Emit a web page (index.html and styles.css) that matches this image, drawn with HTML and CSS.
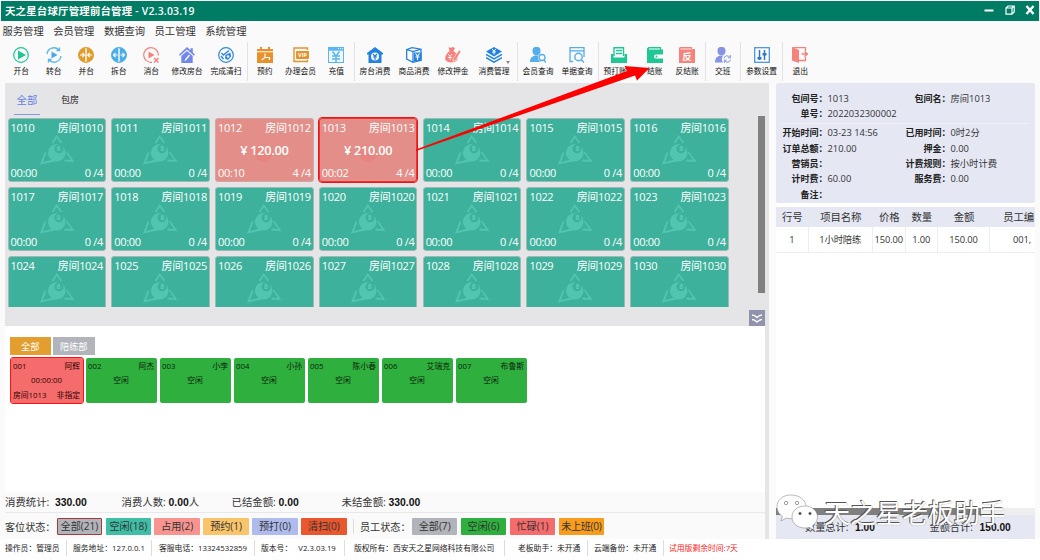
FILE: index.html
```
<!DOCTYPE html>
<html lang="zh-CN">
<head>
    <meta charset="UTF-8">
    <meta name="viewport" content="width=device-width, initial-scale=1.0">
    <title>天之星台球厅管理前台管理</title>
    <link rel="stylesheet" href="styles.css">
</head>
<body>
    <header class="title-bar">
        <h1>天之星台球厅管理前台管理 - V2.3.03.19</h1>
        <div class="window-buttons">
            <svg width="10" height="10" viewBox="0 0 10 10"><path d="M0.5 5.5h9" stroke="#fff" stroke-width="2"/></svg>
            <svg width="10" height="10" viewBox="0 0 10 10" fill="none" stroke="#fff" stroke-width="1.2"><path d="M1 3h6v6.200H1zM1 3l2-2h6.200v6L7 9.200M7 3l2-2"/></svg>
            <svg width="10" height="10" viewBox="0 0 10 10"><path d="M1.500 1l7 8M8.500 1l-7 8" stroke="#fff" stroke-width="2.4"/></svg>
        </div>
    </header>

    <nav class="menu">
        <span>服务管理</span>
        <span>会员管理</span>
        <span>数据查询</span>
        <span>员工管理</span>
        <span>系统管理</span>
    </nav>

    <div class="toolbar">
        <div class="tool-group">
            <div class="tool">
                <svg viewBox="0 0 16 16"><circle cx="8" cy="8" r="7.300" fill="none" stroke="#1fc795" stroke-width="1.200"/><path d="M5 3.500l8 4.500-8 4.500z" fill="#1fc795"/></svg>
                <span>开台</span>
            </div>
            <div class="tool">
                <svg viewBox="0 0 16 16"><path d="M1 7a7 7 0 0 1 12-4M15 9a7 7 0 0 1-12 4M13.500.500v3h-3M2.500 15.500v-3h3" fill="none" stroke="#58b4ee" stroke-width="1.300"/><path d="M5.500 4.500l6 3.500-6 3.500z" fill="#4aa8ea"/></svg>
                <span>转台</span>
            </div>
            <div class="tool">
                <svg viewBox="0 0 16 16"><circle cx="8" cy="8" r="7.300" fill="#fff" stroke="#e29b2d" stroke-width="1.200"/><path d="M7.300 1a7 7 0 0 0 0 14zM8.700 1a7 7 0 0 1 0 14z" fill="#e29b2d"/><path d="M2 8h4M4.300 5.800L6.300 8l-2 2.200M14 8h-4M11.700 5.800L9.700 8l2 2.200" fill="none" stroke="#fff" stroke-width="1.200"/></svg>
                <span>并台</span>
            </div>
            <div class="tool">
                <svg viewBox="0 0 16 16"><circle cx="8" cy="8" r="7.300" fill="#fff" stroke="#4aaeea" stroke-width="1.200"/><path d="M7.300 1a7 7 0 0 0 0 14zM8.700 1a7 7 0 0 1 0 14z" fill="#4aaeea"/><path d="M2.500 8h4M4.500 5.800L2.500 8l2 2.200M13.500 8h-4M11.500 5.800l2 2.200-2 2.200" fill="none" stroke="#fff" stroke-width="1.200"/></svg>
                <span>拆台</span>
            </div>
            <div class="tool">
                <svg viewBox="0 0 16 16"><path d="M9 15.200A7.300 7.300 0 1 1 15.300 8.500" fill="none" stroke="#f77f79" stroke-width="1.200"/><path d="M5.500 4.500l6 3.500-6 3.500z" fill="#f77f79"/><path d="M11 11l4.500 4.500M15.500 11L11 15.500" stroke="#f77f79" stroke-width="1.400"/></svg>
                <span>消台</span>
            </div>
            <div class="tool wide">
                <svg viewBox="0 0 16 16"><path d="M8 0l3.500 3.300V1.200h2.300v4.300L16 7.700l-1 1L8 2.500 1 8.700l-1-1zM8 4l5.700 5v7H2.300V9z" fill="#7187ec"/><path d="M6 12.500l4-5 1 1-4 5-1.500.500z" fill="#fff"/></svg>
                <span>修改房台</span>
            </div>
            <div class="tool wide">
                <svg viewBox="0 0 16 16"><circle cx="8" cy="8" r="7.300" fill="none" stroke="#2f86e0" stroke-width="1.200"/><path d="M3.500 6l2 2L11 3.500" fill="none" stroke="#2f86e0" stroke-width="1.400"/><path d="M7.500 8l5-2.500.500 4-3 3.500-3-1.500z" fill="#2f86e0"/><circle cx="10" cy="9.500" r="1.200" fill="#fff"/><path d="M3 9l2.500 3" stroke="#2f86e0" stroke-width="1.500"/></svg>
                <span>完成清扫</span>
            </div>
        </div>
        <div class="tool-group">
            <div class="tool">
                <svg viewBox="0 0 16 16"><path d="M0 2h3V0h2v2h6V0h2v2h3v2.300H0zM0 5.300h16V16H0z" fill="#e8912a"/><path d="M8 6.500v4L4.500 13M8 10.500h4.500V13" fill="none" stroke="#fff" stroke-width="1.200"/></svg>
                <span>预约</span>
            </div>
            <div class="tool wide">
                <svg viewBox="0 0 16 16"><path d="M14.500 3V1H1v13.500h13.500V13" fill="none" stroke="#e8912a" stroke-width="1.400"/><rect x="3" y="4" width="13" height="8" rx="1" fill="#e8912a"/><text x="9.500" y="10" class="vip">VIP</text></svg>
                <span>办理会员</span>
            </div>
            <div class="tool">
                <svg viewBox="0 0 16 16"><path d="M0 0h16v16H0z" fill="#5ab6f3"/><path d="M1 3.700h14V15H1z" fill="#eef7fe"/><path d="M10 1.700h1M12 1.700h1M14 1.700h1" stroke="#fff"/><path d="M4.500 4.500L8 9l3.500-4.500M8 9v6M4 9h8M4 12h8" fill="none" stroke="#5ab6f3" stroke-width="1.500"/></svg>
                <span>充值</span>
            </div>
        </div>
        <div class="tool-group">
            <div class="tool wide">
                <svg viewBox="0 0 16 16"><path d="M8 0l8 6v1.500h-1.500V16h-13V7.500H0V6z" fill="#2382df"/><circle cx="8" cy="9.500" r="4" fill="#fff"/><path d="M6 7l2 2.300L10 7M8 9.300V13M6 10h4" fill="none" stroke="#2382df" stroke-width="1.200"/></svg>
                <span>房台消费</span>
            </div>
            <div class="tool wide">
                <svg viewBox="0 0 16 16"><path d="M.700 2.500L6 .700l9 1.500v11L7 15.300.700 12zM.700 2.500L7 4.500l8-2.300M7 4.500v11" fill="#fff" stroke="#2382df" stroke-width="1.300"/><rect x="8" y="5.500" width="7.500" height="8.500" fill="#2382df"/><path d="M9.500 6.500l2 2.500 2-2.500M11.500 9v4M9.500 10h4" fill="none" stroke="#fff" stroke-width="1.100"/></svg>
                <span>商品消费</span>
            </div>
            <div class="tool wide">
                <svg viewBox="0 0 16 16"><path d="M3.500 0l2 1 2-1 2.500 1-1.500 3.200C12 6 13 9 12.500 12c-1 4.500-10 4.500-12 1C-.500 10 1 6.500 4.500 4.200z" fill="#f5837c"/><path d="M8 12l6-9 2 1.500-5.500 9-2.500 1z" fill="#f5837c" stroke="#fff" stroke-width=".600"/><path d="M3 7l2 2.500L7 7M5 9.500V13M3 10.500h4" fill="none" stroke="#fff" stroke-width=".800"/></svg>
                <span>修改押金</span>
            </div>
            <div class="tool drop">
                <svg viewBox="0 0 16 16"><path d="M8 0l8 4.500L8 9.500 0 4.500z" fill="#2382df"/><path d="M0 7.500l8 4.500 8-4.500M0 10.700l8 4.500 8-4.500" fill="none" stroke="#2382df" stroke-width="1.500"/><path d="M6 2l2 2 2-2M8 4v3.500M6 5h4" fill="none" stroke="#fff"/></svg>
                <span>消费管理</span>
            </div>
        </div>
        <div class="tool-group">
            <div class="tool wide">
                <svg viewBox="0 0 16 16"><ellipse cx="6.500" cy="4" rx="4" ry="4.200" fill="#53aeee"/><path d="M0 15C0 10 3 9.500 5 8.500h3.500A4.500 4.500 0 0 0 11 15z" fill="#53aeee"/><circle cx="12" cy="10.500" r="3" fill="none" stroke="#53aeee" stroke-width="1.300"/><path d="M14 13l2 2.500" stroke="#53aeee" stroke-width="1.500"/></svg>
                <span>会员查询</span>
            </div>
            <div class="tool wide">
                <svg viewBox="0 0 16 16"><path d="M4 14.500H1V.700h14V10" fill="none" stroke="#53aeee" stroke-width="1.300"/><path d="M1 3.200h14v1.300H1z" fill="#53aeee"/><circle cx="9.500" cy="10" r="3.700" fill="none" stroke="#53aeee" stroke-width="1.400"/><path d="M12 12.500l3 3" fill="none" stroke="#53aeee" stroke-width="1.400"/></svg>
                <span>单据查询</span>
            </div>
        </div>
        <div class="tool-group">
            <div class="tool wide">
                <svg viewBox="0 0 16 16"><path d="M0 7h2.500v3.500h11V7H16v9H0z" fill="#1fc795"/><path d="M3 9V.700h9.500V9" fill="#fff" stroke="#1fc795" stroke-width="1.400"/><path d="M5 3.500h6M5 6.500h6" stroke="#1fc795" stroke-width="1.300"/></svg>
                <span>预打账单</span>
            </div>
            <div class="tool">
                <svg viewBox="0 0 16 16"><path d="M0 1.500L1.500 0H14v2.500h2V16H0z" fill="#1fc795"/><path d="M2 2h11" stroke="#fff"/><path d="M16 7.500H9a2 2 0 0 0 0 4h7z" fill="#fff"/><circle cx="9.500" cy="9.500" r="1" fill="#1fc795"/></svg>
                <span>结账</span>
            </div>
            <div class="tool">
                <svg viewBox="0 0 16 16"><path d="M0 1l1-1h12v2h3v14H0z" fill="#f5837c"/><path d="M1.500 2h11" stroke="#fff" stroke-width=".800"/><text x="8" y="13" class="fan">反</text></svg>
                <span>反结账</span>
            </div>
        </div>
        <div class="tool-group">
            <div class="tool">
                <svg viewBox="0 0 16 16"><ellipse cx="6.500" cy="4" rx="4" ry="4.200" fill="#8794e6"/><path d="M0 15.500C0 10 3 9.500 5 8.500h3.500A5 5 0 0 0 8 15.500z" fill="#8794e6"/><path d="M9 11.500a3.200 3.200 0 0 1 6-1M15.500 12.500a3.200 3.200 0 0 1-6 1M15.300 8v2.800h-2.500M9.300 16v-2.800h2.500" fill="none" stroke="#8794e6"/></svg>
                <span>交班</span>
            </div>
        </div>
        <div class="tool-group">
            <div class="tool wide">
                <svg viewBox="0 0 16 16"><rect x=".700" y=".700" width="14.600" height="14.600" fill="#fff" stroke="#4b97dc" stroke-width="1.300"/><path d="M5.500 3v10M10.500 3v10" stroke="#2f78c4" stroke-width="1.500"/><path d="M3.500 10h4v2.500h-4zM8.500 6h4v2.500h-4z" fill="#2f78c4"/></svg>
                <span>参数设置</span>
            </div>
        </div>
        <div class="tool-group">
            <div class="tool">
                <svg viewBox="0 0 16 16"><path d="M0 0l7 3v13l-7-2.500z" fill="#f5837c"/><path d="M1 .700h12.500V4M7 13.500h6.500V10" fill="none" stroke="#f5837c" stroke-width="1.300"/><path d="M9.500 7h5M12.500 4.500L15.300 7l-2.800 2.500" fill="none" stroke="#f5837c" stroke-width="1.600"/></svg>
                <span>退出</span>
            </div>
        </div>
    </div>

    <main class="main">
        <div class="left">
            <section class="rooms">
                <div class="room-side">
                    <div class="room-tabs">
                        <span class="active">全部</span>
                        <span>包房</span>
                    </div>
                    <div class="room-grid" id="roomGrid"></div>
                </div>
                <div class="room-tail">
                    <div class="scroll-thumb"></div>
                    <div class="fold">
                        <svg width="12" height="11" viewBox="0 0 12 11" fill="none" stroke="#fff" stroke-width="1.300"><path d="M1 2q2.500 0 5 2.500Q8.500 2 11 2M1 6.500q2.500 0 5 2.500 2.500-2.500 5-2.500"/></svg>
                    </div>
                </div>
            </section>

            <section class="staff">
                <div class="staff-tabs">
                    <span class="active">全部</span>
                    <span>陪练部</span>
                </div>
                <div class="staff-list" id="staffList"></div>
            </section>

            <div class="stats">
                <span class="stat s1">消费统计: <b>330.00</b></span>
                <span class="stat s2">消费人数: <b>0.00</b>人</span>
                <span class="stat s3">已结金额: <b>0.00</b></span>
                <span class="stat">未结金额: <b>330.00</b></span>
            </div>
            <div class="status">
                <span class="status-label">客位状态：</span>
                <span class="chip gray selected">全部(21)</span>
                <span class="chip teal">空闲(18)</span>
                <span class="chip pink">占用(2)</span>
                <span class="chip yellow">预约(1)</span>
                <span class="chip blue">预打(0)</span>
                <span class="chip orange">清扫(0)</span>
                <span class="status-label staff-label">员工状态：</span>
                <span class="chip gray">全部(7)</span>
                <span class="chip green">空闲(6)</span>
                <span class="chip red">忙碌(1)</span>
                <span class="chip amber">未上班(0)</span>
            </div>
        </div>

        <aside class="order">
            <div class="order-info">
                <div class="info-grid">
                    <b>包间号：</b><span>1013</span><b>包间名：</b><span>房间1013</span>
                    <b>单号：</b><span>2022032300002</span>
                </div>
                <div class="info-grid second">
                    <b>开始时间：</b><span>03-23 14:56</span><b>已用时间：</b><span>0时2分</span>
                    <b>订单总额：</b><span>210.00</span><b>押金：</b><span>0.00</span>
                    <b>营销员：</b><span></span><b>计费规则：</b><span>按小时计费</span>
                    <b>计时费：</b><span>60.00</span><b>服务费：</b><span>0.00</span>
                    <b>备注：</b><span></span>
                </div>
            </div>
            <div class="order-table">
                <div class="order-row head">
                    <span>行号</span><span>项目名称</span><span>价格</span><span>数量</span><span>金额</span><span class="last">员工编</span>
                </div>
                <div class="order-row">
                    <span>1</span><span>1小时陪练</span><span>150.00</span><span>1.00</span><span>150.00</span><span class="last">001,</span>
                </div>
            </div>
            <div class="order-scroll"><div class="order-thumb"></div></div>
            <div class="order-total">
                <span>数量总计: <b>1.00</b></span>
                <span>金额合计: <b>150.00</b></span>
            </div>
        </aside>
    </main>

    <footer class="footer">
        <span class="f1">操作员：管理员</span>
        <span class="f2">服务地址：127.0.0.1</span>
        <span class="f3">客服电话：13324532859</span>
        <span class="f4">版本号：&nbsp;&nbsp; V2.3.03.19</span>
        <span class="f5">版权所有：西安天之星网络科技有限公司</span>
        <span class="f6">老板助手：未开通</span>
        <span class="f7">云端备份：未开通</span>
        <span class="trial">试用版剩余时间:7天</span>
    </footer>

    <svg class="arrow" viewBox="0 0 240 90"><path d="M2 85.500L213 7l-2.500-5 25 2-12.500 12.500-2-5L2 87z" fill="#fe0000"/></svg>

    <div class="watermark">
        <svg width="43" height="37" viewBox="0 0 43 37" stroke="#777" stroke-width=".500">
            <path d="M15 1C6 1 1 6.500 1 13c0 4.500 2.500 7.500 5.500 9.500L5 27l5.500-3c2 .500 3.500.700 5 .700C25 25 30 19 30 13 30 6 23.500 1 15 1z" fill="#fff"/>
            <path d="M29 12c-8 0-13 5-13 11s5 11 13 11c1.500 0 3-.200 4.300-.600L38 36l-1.500-4.300c3-2 5-5 5-8.700 0-6-5.500-11-12.500-11z" fill="#fff"/>
            <g fill="#fff" stroke="#444"><circle cx="10" cy="9" r="1.700"/><circle cx="21" cy="9" r="1.700"/></g>
            <g fill="#444"><circle cx="24" cy="19.500" r="1.300"/><circle cx="34" cy="19.500" r="1.300"/></g>
        </svg>
        <span>天之星老板助手</span>
    </div>

    <script>
        // rooms in use: number -> [amount, time]
        const used = { 1012: ['120.00', '00:10'], 1013: ['210.00', '00:02'] };
        const selectedRoom = 1013;

        const staff = [
            ['001', '阿辉'], ['002', '阿杰'], ['003', '小李'], ['004', '小孙'],
            ['005', '陈小春'], ['006', '艾瑞克'], ['007', '布鲁斯']
        ];

        const ballIcon = `
            <svg class="ball" viewBox="0 0 36 31">
                <path d="M12.500 8l4.200-6.500L21.500 8" fill="none" stroke="currentColor" stroke-width="1.800"/>
                <path d="M4.500 17.500h2L3 27l10-2.500 2 2L0 29.500zM27 16.500l7.500 10.500-10.500-.500 1-2 6 .500-5-7.500z" fill="currentColor"/>
                <circle cx="16.700" cy="17.700" r="8.800" fill="currentColor"/>
                <circle class="ball-spot" cx="19" cy="13.700" r="4.500"/>
            </svg>`;

        function renderRooms() {
            const html = [];
            for (let no = 1010; no <= 1030; no++) {
                const room = used[no];
                html.push(`
                    <div class="room ${room ? 'busy' : ''} ${no === selectedRoom ? 'selected' : ''}">
                        ${ballIcon}
                        <div class="room-line"><span>${no}</span><span>房间${no}</span></div>
                        ${room ? `<div class="room-price">¥ ${room[0]}</div>` : '<div class="ball-no">8</div>'}
                        <div class="room-line"><span>${room ? room[1] : '00:00'}</span><span>${room ? 4 : 0} /4</span></div>
                    </div>`);
            }
            document.getElementById('roomGrid').innerHTML = html.join('');
        }

        function renderStaff() {
            document.getElementById('staffList').innerHTML = staff.map(([no, name], i) => `
                <div class="person ${i === 0 ? 'working' : ''}">
                    <div class="person-line"><span>${no}</span><span>${name}</span></div>
                    <div class="person-state">${i === 0 ? '00:00:00' : '空闲'}</div>
                    <div class="person-line">${i === 0 ? '<span>房间1013</span><span>非指定</span>' : ''}</div>
                </div>
            `).join('');
        }

        renderRooms();
        renderStaff();
    </script>
</body>
</html>
```
FILE: styles.css
```
* {
    box-sizing: border-box;
}

body {
    display: flex;
    flex-direction: column;
    width: 1040px;
    height: 560px;
    margin: 0;
    padding: 1px 0 0;
    overflow: hidden;
    position: relative;
    font-family: "Open Sans", "Noto Sans CJK SC", sans-serif;
    font-size: 10.4px;
    color: #333;
    background-color: #fafafa;
    white-space: nowrap;
}

/* Title bar */
.title-bar {
    display: flex;
    align-items: center;
    justify-content: space-between;
    height: 20px;
    margin: 0 1px;
    padding: 0 4px 0 4px;
    background-color: #007b64;
    color: #fff;
}

.title-bar h1 {
    margin: 0;
    font-size: 10.4px;
    font-weight: 600;
    line-height: 19px;
    letter-spacing: 0.22px;
}

.window-buttons {
    display: flex;
    gap: 10.5px;
    padding-bottom: 2px;
}

/* Menu and toolbar */
.menu {
    display: flex;
    gap: 9.5px;
    height: 21px;
    padding-left: 2.5px;
    line-height: 21px;
    font-size: 10.3px;
}

.toolbar {
    display: flex;
    height: 41px;
    padding-left: 4px;
}

.tool-group {
    display: flex;
    height: 39px;
    padding: 0 1px;
    border-right: 1px solid #e2e2e2;
}

.tool-group:last-child {
    border-right: none;
}

.tool {
    position: relative;
    display: flex;
    flex-direction: column;
    align-items: center;
    width: 32.5px;
    padding-top: 5px;
    font-size: 7.75px;
    color: #111;
}

.tool.wide {
    width: 39px;
}

.tool.drop {
    width: 43px;
}

.tool svg {
    width: 16px;
    height: 16px;
}

.tool span {
    margin-top: 2px;
    line-height: 12px;
}

.tool.drop::after {
    content: "";
    position: absolute;
    top: 19px;
    right: 6px;
    border: 2.5px solid transparent;
    border-top: 3px solid #888;
}

.vip {
    font-size: 5.5px;
    font-weight: bold;
    fill: #fff;
    text-anchor: middle;
}

.fan {
    font-size: 9.5px;
    font-weight: bold;
    fill: #fff;
    text-anchor: middle;
}

/* Layout */
.main {
    display: flex;
    gap: 7px;
    height: 456px;
    padding: 0 5px;
}

.left {
    display: flex;
    flex-direction: column;
    width: 764px;
    border-right: 4px solid #e5e5e8;
}

/* Rooms */
.rooms {
    display: flex;
    justify-content: space-between;
    height: 243px;
    background-color: #e5e5e8;
}

.room-side {
    padding-left: 2.5px;
}

.room-tabs {
    display: flex;
    gap: 15px;
    height: 34px;
    padding-left: 6.5px;
    line-height: 34px;
    font-size: 9px;
    color: #111;
}

.room-tabs span {
    width: 26px;
    height: 32px;
    text-align: center;
}

.room-tabs .active {
    font-size: 10.4px;
    color: #6480e6;
    border-bottom: 1.5px solid #8299ea;
}

.room-tabs span + span {
    margin-left: 2px;
}

.room-grid {
    display: grid;
    grid-template-columns: repeat(7, 98.6px);
    grid-auto-rows: 64px;
    gap: 5px 5.2px;
    height: 190px;
    padding-top: 1px;
    overflow: hidden;
}

.room {
    position: relative;
    display: flex;
    flex-direction: column;
    justify-content: space-between;
    padding: 1px 2px;
    border: 1px solid #9fbab3;
    border-radius: 3px;
    background-color: #3db19b;
    color: #fff;
    font-size: 11px;
}

.room.busy {
    border-color: #cfa8a6;
    background-color: #e38e88;
}

.room.selected {
    outline: 1px solid #f01414;
    border-color: #e33;
}

.room-line {
    display: flex;
    justify-content: space-between;
    position: relative;
    line-height: 15px;
    letter-spacing: -0.3px;
}

.room-price {
    position: relative;
    text-align: center;
    font-size: 12.8px;
    font-weight: 600;
    line-height: 18px;
    letter-spacing: -0.3px;
}

.ball {
    position: absolute;
    top: 16px;
    left: 31px;
    width: 36px;
    height: 31px;
    color: #52c5b0;
}

.ball-spot {
    fill: #3db19b;
}

.ball-no {
    position: absolute;
    top: 25px;
    left: 48px;
    font-size: 7px;
    font-weight: bold;
    line-height: 9px;
    color: #5fcdb9;
}

.busy .ball {
    color: #e8847f;
}

.busy .ball path {
    display: none;
}

.busy .ball-spot {
    fill: #e38e88;
}

.room-tail {
    display: flex;
    flex-direction: column;
    align-items: flex-end;
    justify-content: space-between;
    padding-top: 33px;
}

.scroll-thumb {
    width: 7px;
    height: 177px;
    background-color: #808080;
}

.fold {
    display: flex;
    align-items: center;
    justify-content: center;
    width: 16px;
    height: 16px;
    background-color: #9193ad;
}

/* Staff */
.staff {
    height: 166px;
    padding: 11px 0 0 4.5px;
    background-color: #fff;
}

.staff-tabs {
    display: flex;
    gap: 2px;
}

.staff-tabs span {
    width: 41.5px;
    height: 18px;
    line-height: 19px;
    text-align: center;
    font-size: 9.2px;
    color: #fff;
    background-color: #b2b4bb;
}

.staff-tabs .active {
    background-color: #e49d2f;
}

.staff-list {
    display: flex;
    gap: 3px;
    margin-top: 3px;
    padding-left: 1px;
}

.person {
    width: 71px;
    height: 45px;
    padding: 1px 2.5px;
    border-radius: 2px;
    background-color: #2fb03e;
    color: #0b1c0d;
    font-size: 7.8px;
}

.person.working {
    width: 72px;
    outline: 1.5px solid #f11;
    background-color: #f56c6c;
    color: #300;
}

.person-line {
    display: flex;
    justify-content: space-between;
    line-height: 14px;
}

.person-state {
    line-height: 15px;
    text-align: center;
}

/* Totals and status rows */
.stats {
    display: flex;
    height: 20px;
    line-height: 20px;
    font-size: 10.4px;
}

.stats b {
    font-family: "Liberation Sans", sans-serif;
    color: #111;
}

.s1 {
    width: 116.5px;
}

.s1 b {
    margin-left: 3px;
}

.s2 {
    width: 110px;
}

.s3 {
    width: 110px;
}

.status {
    display: flex;
    align-items: center;
    gap: 3.4px;
    height: 27px;
    border-top: 1px solid #e8e8e8;
    font-size: 10.1px;
}

.status-label {
    width: 48.3px;
}

.staff-label {
    width: 55.5px;
    margin-left: 3px;
    padding-left: 6px;
    border-left: 1px solid #ddd;
}

.chip {
    flex-shrink: 0;
    width: 45.5px;
    height: 17px;
    line-height: 17px;
    text-align: center;
    border-radius: 1px;
}

.chip.selected {
    line-height: 15px;
    border: 1px solid #a43a3a;
}

.gray { background-color: #b2b4bb; }
.teal { background-color: #3fbda5; }
.pink { background-color: #f8948f; }
.yellow { background-color: #fac46b; }
.blue { background-color: #b0bbed; }
.orange { background-color: #e8572d; }
.green { background-color: #2fb03e; }
.red { background-color: #f56c6c; }

.amber {
    background-color: #f79c1c;
    letter-spacing: -0.3px;
}

/* Order panel */
.order {
    display: flex;
    flex-direction: column;
    width: 259px;
    background-color: #fff;
}

.order-info {
    height: 120px;
    padding: 8px 6px 0;
    background-color: #e5e7f3;
    border-radius: 2px;
    font-size: 9.3px;
}

.info-grid {
    display: grid;
    grid-template-columns: 45.5px 78px 45px 70px;
    grid-auto-rows: 15.4px;
    line-height: 15.4px;
}

.info-grid b {
    font-size: 9px;
    text-align: right;
    color: #222;
}

.info-grid.second {
    margin-top: 1.5px;
    padding-top: 1px;
    border-top: 1px solid #f0f0f5;
}

.order-table {
    flex: 1;
    margin-top: 4px;
    overflow: hidden;
}

.order-row {
    display: grid;
    grid-template-columns: 32.5px 64.5px 32.5px 32.5px 52px 45px;
    height: 25.5px;
    line-height: 25px;
    border-bottom: 1px solid #eee;
    font-size: 9.3px;
    text-align: center;
}

.order-row span {
    border-right: 1px solid #eee;
    letter-spacing: -0.1px;
}

.order-row.head {
    height: 20px;
    line-height: 20px;
    font-size: 10.4px;
    border-bottom: none;
    background-color: #e5e7f3;
}

.order-row.head span {
    border-right: none;
}

.order-row .last {
    padding-right: 4px;
    text-align: right;
    border-right: none;
}

.order-row.head .last {
    padding-right: 1px;
}

.order-scroll {
    height: 7px;
    background-color: #eee;
}

.order-thumb {
    width: 205px;
    height: 7px;
    background-color: #7f7f7f;
}

.order-total {
    display: flex;
    height: 24px;
    line-height: 25px;
    background-color: #e5e7f3;
    font-size: 10.2px;
}

.order-total span {
    width: 50%;
    padding-left: 29px;
}

.order-total span + span {
    padding-left: 24px;
}

.order-total b {
    margin-left: 4px;
    font-family: "Liberation Sans", sans-serif;
    color: #111;
}

/* Footer */
.footer {
    display: flex;
    height: 21px;
    padding: 1px 0 4px;
    background-color: #fff;
    font-size: 7.8px;
    line-height: 17px;
    color: #222;
}

.footer span {
    padding-left: 7px;
    border-right: 1px solid #ddd;
}

.footer .f1 { width: 67px; padding-left: 5px; }
.footer .f2 { width: 85px; padding-left: 6px; }
.footer .f3 { width: 103px; }
.footer .f4 { width: 90px; padding-left: 6px; }
.footer .f5 { width: 160px; padding-left: 9px; }
.footer .f6 { width: 83px; padding-left: 13px; }
.footer .f7 { width: 76px; padding-left: 6px; }

.footer .trial {
    padding-left: 5px;
    border-right: none;
    color: #f22;
}

/* Overlays */
.arrow {
    position: absolute;
    top: 64px;
    left: 414px;
    width: 240px;
    height: 90px;
}

.watermark {
    position: absolute;
    top: 494px;
    left: 776px;
    display: flex;
    gap: 5px;
    font-size: 26px;
    line-height: 38px;
    color: #fff;
    text-shadow: -1px -1px 0 #555, 0 0 1px #777;
}
```
